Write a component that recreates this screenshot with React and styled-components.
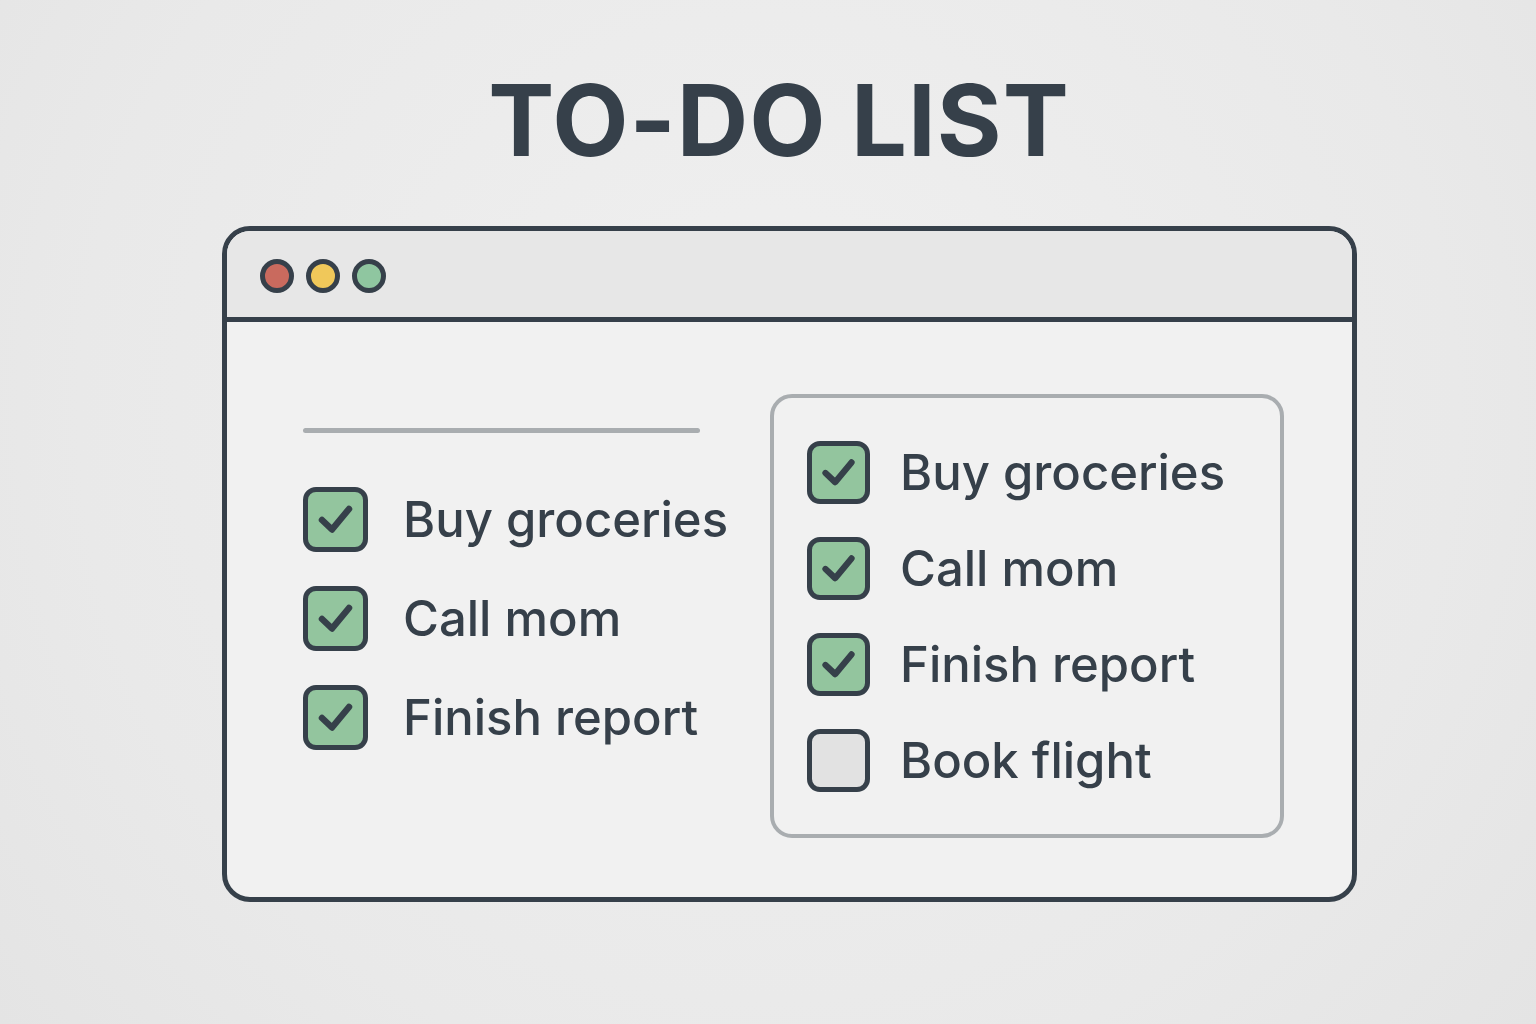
import styled, { createGlobalStyle } from "styled-components";

const ink = "#36404a";
const muted = "#a9adb0";

const GlobalStyle = createGlobalStyle`
	html, body {
		margin: 0;
		padding: 0;
	}
	body {
		background: #ebebeb;
		font-family: Inter, "Noto Sans", sans-serif;
		color: ${ink};
	}
`;

const Page = styled.main`
	width: 1536px;
	height: 1024px;
	box-sizing: border-box;
	padding-top: 62px;
	background: radial-gradient(circle at 50% 40%, #f0f0f0 0%, #e9e9e9 70%, #e4e4e4 100%);
	display: flex;
	flex-direction: column;
	align-items: flex-start;
`;

const Title = styled.h1`
	align-self: stretch;
	margin: 0 0 48px 22px;
	font-size: 99px;
	line-height: 116px;
	font-weight: 700;
	letter-spacing: 1px;
	text-align: center;
	color: ${ink};
`;

const Window = styled.section`
	margin-left: 222px;
	width: 1135px;
	height: 676px;
	box-sizing: border-box;
	border: 5px solid ${ink};
	border-radius: 28px;
	overflow: hidden;
	background: #f1f1f1;
	display: flex;
	flex-direction: column;
`;

const TitleBar = styled.header`
	height: 91px;
	flex-shrink: 0;
	box-sizing: border-box;
	border-bottom: 5px solid ${ink};
	background: #e7e7e7;
	display: flex;
	align-items: center;
	gap: 12px;
	padding: 4px 0 0 33px;
`;

const Dot = styled.span`
	width: 24px;
	height: 24px;
	border-radius: 50%;
	border: 5px solid ${ink};
	background: ${(p) => p.$color};
`;

const Body = styled.div`
	flex: 1;
	display: flex;
	align-items: flex-start;
	padding: 72px 0 0 76px;
`;

const LeftColumn = styled.div`
	width: 467px;
	padding-top: 34px;
	display: flex;
	flex-direction: column;
`;

const Rule = styled.div`
	width: 397px;
	height: 5px;
	border-radius: 3px;
	background: ${muted};
	margin-bottom: 54px;
`;

const List = styled.ul`
	list-style: none;
	margin: 0;
	padding: 0;
	display: flex;
	flex-direction: column;
	gap: ${(p) => p.$gap}px;
`;

const Item = styled.li`
	display: flex;
	align-items: center;
	gap: ${(p) => p.$gap}px;
	font-size: 49px;
	font-weight: 500;
	white-space: nowrap;
`;

const Box = styled.span`
	width: ${(p) => p.$size}px;
	height: ${(p) => p.$size}px;
	flex-shrink: 0;
	box-sizing: border-box;
	border: 5px solid ${ink};
	border-radius: 13px;
	background: ${(p) => (p.$checked ? "#93c59e" : "#e2e2e2")};
	display: flex;
	align-items: center;
	justify-content: center;

	svg {
		width: 100%;
		height: 100%;
	}
`;

const Panel = styled.div`
	width: 514px;
	height: 444px;
	box-sizing: border-box;
	border: 4px solid ${muted};
	border-radius: 22px;
	padding: 43px 0 0 33px;
`;

const Check = ({ checked, size }) => (
	<Box $checked={checked} $size={size}>
		{checked && (
			<svg viewBox="0 0 55 55">
				<polyline
					points="14,28 24,37.5 41,17"
					fill="none"
					stroke={ink}
					strokeWidth="6.5"
					strokeLinecap="round"
					strokeLinejoin="round"
				/>
			</svg>
		)}
	</Box>
);

const leftTasks = ["Buy groceries", "Call mom", "Finish report"];
const rightTasks = [
	{ label: "Buy groceries", done: true },
	{ label: "Call mom", done: true },
	{ label: "Finish report", done: true },
	{ label: "Book flight", done: false },
];

export default function App() {
	return (
		<>
			<GlobalStyle />
			<Page>
				<Title>TO-DO LIST</Title>
				<Window>
					<TitleBar>
						<Dot $color="#c96a5e" />
						<Dot $color="#f0c85a" />
						<Dot $color="#8fc6a0" />
					</TitleBar>
					<Body>
						<LeftColumn>
							<Rule />
							<List $gap={34}>
								{leftTasks.map((t) => (
									<Item key={t} $gap={35}>
										<Check checked size={65} />
										{t}
									</Item>
								))}
							</List>
						</LeftColumn>
						<Panel>
							<List $gap={33}>
								{rightTasks.map((t) => (
									<Item key={t.label} $gap={30}>
										<Check checked={t.done} size={63} />
										{t.label}
									</Item>
								))}
							</List>
						</Panel>
					</Body>
				</Window>
			</Page>
		</>
	);
}
